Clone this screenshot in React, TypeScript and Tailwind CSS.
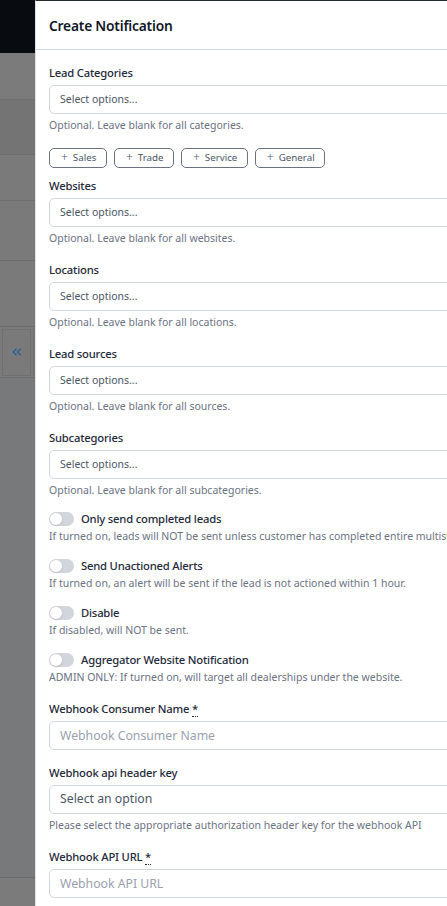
import React from 'react';

const FONT = { fontFamily: '"Noto Sans", "Open Sans", Arial, sans-serif' };

const labelCls = 'text-[11.25px] leading-4 font-medium tracking-[-0.2px] text-gray-800';
const helperCls = 'text-[10.5px] leading-4 text-gray-500';

function Field({ label, helper }: { label: string; helper: string }) {
  return (
    <div>
      <div className={labelCls}>{label}</div>
      <div className="mt-1 h-[29px] rounded-[5px] border border-gray-300 flex items-center px-[10px] text-[10.5px] text-gray-600">
        Select options...
      </div>
      <div className={`mt-[3px] ${helperCls}`}>{helper}</div>
    </div>
  );
}

function Toggle({ label, helper }: { label: string; helper: string }) {
  return (
    <div>
      <div className="flex items-center gap-[7px] h-4">
        <span className="relative w-[25px] h-[14px] rounded-full bg-gray-300 shrink-0">
          <span className="absolute left-[1px] top-[1px] w-[12px] h-[12px] rounded-full bg-white shadow-sm" />
        </span>
        <span className={`${labelCls} whitespace-nowrap`}>{label}</span>
      </div>
      <div className={`mt-[1px] ${helperCls} whitespace-nowrap`}>{helper}</div>
    </div>
  );
}

function Chip({ label }: { label: string }) {
  return (
    <span className="h-5 flex items-center gap-[5px] pl-[11px] pr-[9.5px] rounded-[5px] border border-gray-500 text-[9.75px] text-gray-600">
      <span className="text-[12px] leading-none font-light">+</span>
      {label}
    </span>
  );
}

function Required({ children }: { children: React.ReactNode }) {
  return (
    <div className={labelCls}>
      {children}{' '}
      <abbr className="no-underline border-b border-dotted border-gray-800 text-gray-800" title="required">*</abbr>
    </div>
  );
}

export default function App() {
  return (
    <div className="w-[447px] h-[906px] overflow-hidden flex bg-white" style={FONT}>
      {/* page behind the drawer, dimmed */}
      <div className="w-[35px] shrink-0 flex flex-col bg-[#7a7b7c]">
        <div className="h-[53px] bg-[#080b10]" />
        <div className="h-[47px] bg-[#7b7b7b] border-b border-[#6e6e6e]" />
        <div className="h-[55px] bg-[#747474] border-b border-[#6e6e6e]" />
        <div className="h-[46px] bg-[#7a7a7a] border-b border-[#6e6e6e]" />
        <div className="h-[60px] bg-[#7a7a7a] border-b border-[#6e6e6e]" />
        <div className="h-[66px] bg-[#7a7a7a] border-b border-[#6e6e6e]" />
        <div className="h-[51px] bg-[#7a7a7a] border-b border-[#6e6e6e] flex items-center pl-[2px] gap-[2px]">
          <div className="w-[29px] h-[47px] border border-[#707070] flex items-center justify-center text-[#2f5f9a]">
            <svg width="10" height="8" viewBox="0 0 10 8" fill="none" stroke="currentColor" strokeWidth="1.4">
              <path d="M4.5 0.8 1.3 4l3.2 3.2M8.8 0.8 5.6 4l3.2 3.2" />
            </svg>
          </div>
          <div className="w-[2px] h-[47px] border-l border-[#707070]" />
        </div>
        <div className="h-[500px] bg-[#78797b] border-b border-[#6a6a6a]" />
        <div className="flex-1 bg-[#7b7b7c]" />
      </div>

      {/* drawer */}
      <div className="w-[480px] shrink-0 flex flex-col border-l border-[#e2e2e2] border-t border-t-[#232b2e]">
        <div className="h-[49px] border-b border-gray-300 flex items-center pl-[13px] pt-[2px]">
          <h2 className="text-[13.75px] font-semibold tracking-[-0.2px] text-gray-900">Create Notification</h2>
        </div>

        <div className="pl-[13px] pr-[20px] pt-[15px]">
          <div>
            <div className={labelCls}>Lead Categories</div>
            <div className="mt-1 h-[29px] rounded-[5px] border border-gray-300 flex items-center px-[10px] text-[10.5px] text-gray-600">
              Select options...
            </div>
            <div className={`mt-[3px] ${helperCls}`}>Optional. Leave blank for all categories.</div>
            <div className="mt-[15px] flex gap-[7px]">
              <Chip label="Sales" />
              <Chip label="Trade" />
              <Chip label="Service" />
              <Chip label="General" />
            </div>
          </div>

          <div className="mt-[10px] flex flex-col gap-4">
            <Field label="Websites" helper="Optional. Leave blank for all websites." />
            <Field label="Locations" helper="Optional. Leave blank for all locations." />
            <Field label="Lead sources" helper="Optional. Leave blank for all sources." />
            <Field label="Subcategories" helper="Optional. Leave blank for all subcategories." />
          </div>

          <div className="mt-[13px] flex flex-col gap-[14px]">
            <Toggle
              label="Only send completed leads"
              helper="If turned on, leads will NOT be sent unless customer has completed entire multistep form."
            />
            <Toggle
              label="Send Unactioned Alerts"
              helper="If turned on, an alert will be sent if the lead is not actioned within 1 hour."
            />
            <Toggle label="Disable" helper="If disabled, will NOT be sent." />
            <Toggle
              label="Aggregator Website Notification"
              helper="ADMIN ONLY: If turned on, will target all dealerships under the website."
            />
          </div>

          <div className="mt-4">
            <Required>Webhook Consumer Name</Required>
            <input
              className="mt-1 w-full h-[29px] rounded-[5px] border border-gray-300 px-[10px] text-[12.25px] text-gray-700 placeholder:text-gray-400 outline-none"
              placeholder="Webhook Consumer Name"
            />
          </div>

          <div className="mt-[15px]">
            <div className={labelCls}>Webhook api header key</div>
            <div className="mt-1 h-[29px] rounded-[5px] border border-gray-300 flex items-center px-[10px] text-[12.25px] text-gray-600">
              Select an option
            </div>
            <div className={`mt-[3px] ${helperCls}`}>
              Please select the appropriate authorization header key for the webhook API
            </div>
          </div>

          <div className="mt-4">
            <Required>Webhook API URL</Required>
            <input
              className="mt-1 w-full h-[29px] rounded-[5px] border border-gray-300 px-[10px] text-[12.25px] text-gray-700 placeholder:text-gray-400 outline-none"
              placeholder="Webhook API URL"
            />
          </div>
        </div>
      </div>
    </div>
  );
}
